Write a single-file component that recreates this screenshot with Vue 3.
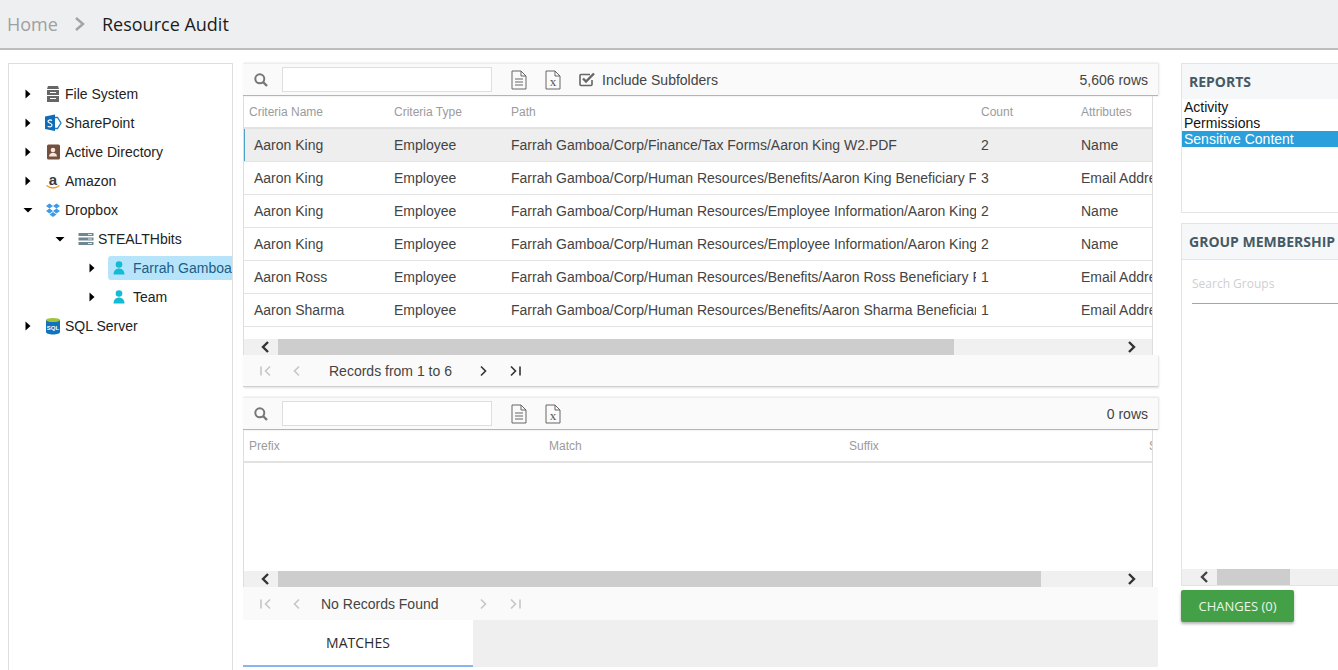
<script setup>
const rows = [
  ['Aaron King', 'Employee', 'Farrah Gamboa/Corp/Finance/Tax Forms/Aaron King W2.PDF', '2', 'Name'],
  ['Aaron King', 'Employee', 'Farrah Gamboa/Corp/Human Resources/Benefits/Aaron King Beneficiary Form.pdf', '3', 'Email Address'],
  ['Aaron King', 'Employee', 'Farrah Gamboa/Corp/Human Resources/Employee Information/Aaron King Information', '2', 'Name'],
  ['Aaron King', 'Employee', 'Farrah Gamboa/Corp/Human Resources/Employee Information/Aaron King Information', '2', 'Name'],
  ['Aaron Ross', 'Employee', 'Farrah Gamboa/Corp/Human Resources/Benefits/Aaron Ross Beneficiary Form.pdf', '1', 'Email Address'],
  ['Aaron Sharma', 'Employee', 'Farrah Gamboa/Corp/Human Resources/Benefits/Aaron Sharma Beneficiary Form.pdf', '1', 'Email Address']
]
const headers = ['Criteria Name', 'Criteria Type', 'Path', 'Count', 'Attributes']
const tree = [
  { label: 'File System', icon: 'fs', depth: 0, arrow: 'right' },
  { label: 'SharePoint', icon: 'sp', depth: 0, arrow: 'right' },
  { label: 'Active Directory', icon: 'ad', depth: 0, arrow: 'right' },
  { label: 'Amazon', icon: 'amz', depth: 0, arrow: 'right' },
  { label: 'Dropbox', icon: 'dbx', depth: 0, arrow: 'down' },
  { label: 'STEALTHbits', icon: 'srv', depth: 1, arrow: 'down' },
  { label: 'Farrah Gamboa', icon: 'user', depth: 2, arrow: 'right', selected: true },
  { label: 'Team', icon: 'user', depth: 2, arrow: 'right' },
  { label: 'SQL Server', icon: 'sql', depth: 0, arrow: 'right' }
]
</script>

<template>
  <div class="page">
    <header class="top">
      <span class="home">Home</span>
      <svg class="crumb" width="12" height="16" viewBox="0 0 12 16"><path d="M2 2l7 6-7 6" fill="none" stroke="#a3a3a3" stroke-width="2.4"/></svg>
      <span class="title">Resource Audit</span>
    </header>

    <main class="main">
      <aside class="tree">
        <div v-for="n in tree" :key="n.label" class="node" :class="'depth' + n.depth">
          <svg class="arrow" width="10" height="10" viewBox="0 0 10 10">
            <path v-if="n.arrow === 'right'" d="M2.5 0.5l5 4.5-5 4.5z" fill="#000"/>
            <path v-else d="M0.5 3h9l-4.5 4.5z" fill="#000"/>
          </svg>
          <div class="node-body" :class="{ sel: n.selected }">
            <svg class="nicon" width="18" height="18" viewBox="0 0 18 18">
              <g v-if="n.icon === 'fs'" fill="#666">
                <path d="M4 1h10l1 3H3z"/>
                <path d="M3 5h12v5H3zM6 7v1h6V7z" fill-rule="evenodd"/>
                <path d="M3 11h12v6H3zM6 13v1h6v-1z" fill-rule="evenodd"/>
              </g>
              <g v-else-if="n.icon === 'sp'">
                <path d="M10 3.5h3.500l3.500 5.500-3.500 5.500H10z" fill="none" stroke="#1c7cc7" stroke-width="1.300"/>
                <path d="M1 2.500L11 0.500v16.500L1 15z" fill="#0f6cb8"/>
                <path d="M8 6.500C6 5.500 4 6 4 7.500s4 1.500 4 3.500-2.500 2.200-4.300 1.200" fill="none" stroke="#fff" stroke-width="1.200"/>
              </g>
              <g v-else-if="n.icon === 'ad'">
                <rect x="3" y="1.500" width="13" height="15" rx="1.500" fill="#74503f"/>
                <circle cx="9" cy="7" r="2.300" fill="#f3e6de"/>
                <path d="M5 13.500c0-5 8-5 8 0z" fill="#f3e6de"/>
              </g>
              <g v-else-if="n.icon === 'amz'">
                <text x="9" y="12.500" text-anchor="middle" class="amz">a</text>
                <path d="M2.500 13.500c4 3 9 3 13 0" fill="none" stroke="#f39a1d" stroke-width="1.500"/>
              </g>
              <g v-else-if="n.icon === 'dbx'" fill="#3d9ae8">
                <path d="M5.500 2.500L9 5 5.500 7.500 2 5zM12.500 2.500L16 5l-3.500 2.500L9 5zM5.500 7.500L9 10l-3.500 2.500L2 10zM12.500 7.500L16 10l-3.500 2.500L9 10z"/>
                <path d="M5.500 13.500L9 11l3.500 2.500L9 16z"/>
              </g>
              <g v-else-if="n.icon === 'srv'">
                <rect x="1.500" y="3" width="15" height="3" fill="#6f8791"/>
                <rect x="1.500" y="7.500" width="15" height="3" fill="#6f8791"/>
                <rect x="1.500" y="12" width="15" height="3" fill="#6f8791"/>
                <path d="M11 4.500h4M11 9h4M11 13.500h4" stroke="#dfe6e9" stroke-width="1"/>
              </g>
              <g v-else-if="n.icon === 'user'" fill="#12bcd4">
                <circle cx="9" cy="5.500" r="3.300"/>
                <path d="M3.500 15.500c0-8 11-8 11 0z"/>
              </g>
              <g v-else>
                <path d="M2 3h14v12c0 1.500-3 2.500-7 2.500S2 16.500 2 15z" fill="#1273bd"/>
                <ellipse cx="9" cy="3" rx="7" ry="2" fill="#9fc43a"/>
                <text x="9" y="12.500" text-anchor="middle" class="sqlt">SQL</text>
              </g>
            </svg>
            <span class="nlabel">{{ n.label }}</span>
          </div>
        </div>
      </aside>

      <section class="center">
        <div class="toolbar">
          <svg class="search" width="16" height="16" viewBox="0 0 16 16"><circle cx="6.800" cy="6.800" r="4.500" fill="none" stroke="#777" stroke-width="2"/><path d="M10 10l4 4" stroke="#777" stroke-width="2.400"/></svg>
          <div class="sbox"></div>
          <svg class="doc" width="16" height="20" viewBox="0 0 16 20"><path d="M1 1h9l5 5v13H1z M10 1v5h5" fill="none" stroke="#666" stroke-width="1"/><path d="M4 9h8M4 12h8M4 15h8" stroke="#666" stroke-width="1"/></svg>
          <svg class="xls" width="16" height="20" viewBox="0 0 16 20"><path d="M1 1h9l5 5v13H1z M10 1v5h5" fill="none" stroke="#666" stroke-width="1"/><text x="8" y="16" text-anchor="middle" class="xt">x</text></svg>
          <svg class="chk" width="17" height="15" viewBox="0 0 17 15"><path d="M13 8v4.500a1 1 0 0 1-1 1H2a1 1 0 0 1-1-1v-9a1 1 0 0 1 1-1h9" fill="none" stroke="#666" stroke-width="1.600"/><path d="M4 6.500l3 3 8-8" fill="none" stroke="#666" stroke-width="2.400"/></svg>
          <span class="inc">Include Subfolders</span>
          <span class="count">5,606 rows</span>
        </div>
        <div class="table t1">
          <div class="row head">
            <div v-for="(h, i) in headers" :key="h" class="cell" :class="'c' + i">{{ h }}</div>
          </div>
          <div v-for="(r, ri) in rows" :key="ri" class="row data" :class="{ active: ri === 0 }">
            <div v-for="(v, i) in r" :key="i" class="cell" :class="'c' + i">{{ v }}</div>
          </div>
          <div class="spacer s1"></div>
          <div class="hbar">
            <svg class="sl" width="14" height="12" viewBox="0 0 14 12"><path d="M9 1L4 6l5 5" fill="none" stroke="#333" stroke-width="2.400"/></svg>
            <div class="thumb th1"></div>
            <svg class="sr" width="14" height="12" viewBox="0 0 14 12"><path d="M5 1l5 5-5 5" fill="none" stroke="#333" stroke-width="2.400"/></svg>
          </div>
        </div>
        <div class="pager">
          <svg class="pi first" width="14" height="12" viewBox="0 0 14 12"><path d="M2 1.500v9M11 1.500L6.500 6l4.500 4.500" fill="none" stroke="#c6c6c6" stroke-width="1.600"/></svg>
          <svg class="pi prev" width="10" height="12" viewBox="0 0 10 12"><path d="M7 1.500L2.500 6 7 10.500" fill="none" stroke="#c6c6c6" stroke-width="1.600"/></svg>
          <span class="ptext p1">Records from 1 to 6</span>
          <svg class="pi next" width="10" height="12" viewBox="0 0 10 12"><path d="M3 1.500L7.500 6 3 10.500" fill="none" stroke="#333" stroke-width="1.600"/></svg>
          <svg class="pi last" width="14" height="12" viewBox="0 0 14 12"><path d="M12 1.500v9M3 1.500L7.500 6 3 10.500" fill="none" stroke="#333" stroke-width="1.600"/></svg>
        </div>

        <div class="toolbar second">
          <svg class="search" width="16" height="16" viewBox="0 0 16 16"><circle cx="6.800" cy="6.800" r="4.500" fill="none" stroke="#777" stroke-width="2"/><path d="M10 10l4 4" stroke="#777" stroke-width="2.400"/></svg>
          <div class="sbox"></div>
          <svg class="doc" width="16" height="20" viewBox="0 0 16 20"><path d="M1 1h9l5 5v13H1z M10 1v5h5" fill="none" stroke="#666" stroke-width="1"/><path d="M4 9h8M4 12h8M4 15h8" stroke="#666" stroke-width="1"/></svg>
          <svg class="xls" width="16" height="20" viewBox="0 0 16 20"><path d="M1 1h9l5 5v13H1z M10 1v5h5" fill="none" stroke="#666" stroke-width="1"/><text x="8" y="16" text-anchor="middle" class="xt">x</text></svg>
          <span class="count">0 rows</span>
        </div>
        <div class="table t2">
          <div class="row head">
            <div class="cell w300">Prefix</div>
            <div class="cell w300">Match</div>
            <div class="cell w300">Suffix</div>
            <div class="cell">S</div>
          </div>
          <div class="spacer s2"></div>
          <div class="hbar">
            <svg class="sl" width="14" height="12" viewBox="0 0 14 12"><path d="M9 1L4 6l5 5" fill="none" stroke="#333" stroke-width="2.400"/></svg>
            <div class="thumb th2"></div>
            <svg class="sr" width="14" height="12" viewBox="0 0 14 12"><path d="M5 1l5 5-5 5" fill="none" stroke="#333" stroke-width="2.400"/></svg>
          </div>
        </div>
        <div class="pager flat">
          <svg class="pi first" width="14" height="12" viewBox="0 0 14 12"><path d="M2 1.500v9M11 1.500L6.500 6l4.500 4.500" fill="none" stroke="#c6c6c6" stroke-width="1.600"/></svg>
          <svg class="pi prev" width="10" height="12" viewBox="0 0 10 12"><path d="M7 1.500L2.500 6 7 10.500" fill="none" stroke="#c6c6c6" stroke-width="1.600"/></svg>
          <span class="ptext p2">No Records Found</span>
          <svg class="pi next2" width="10" height="12" viewBox="0 0 10 12"><path d="M3 1.500L7.500 6 3 10.500" fill="none" stroke="#c6c6c6" stroke-width="1.600"/></svg>
          <svg class="pi last" width="14" height="12" viewBox="0 0 14 12"><path d="M12 1.500v9M3 1.500L7.500 6 3 10.500" fill="none" stroke="#c6c6c6" stroke-width="1.600"/></svg>
        </div>
        <div class="tabs">
          <div class="tab">MATCHES</div>
        </div>
      </section>

      <aside class="right">
        <div class="panel reports">
          <div class="phead">REPORTS</div>
          <div class="opt">Activity</div>
          <div class="opt">Permissions</div>
          <div class="opt on">Sensitive Content</div>
        </div>
        <div class="panel groups">
          <div class="phead ph2">GROUP MEMBERSHIP</div>
          <div class="gsearch">Search Groups</div>
          <div class="gfill"></div>
          <div class="hbar rbar">
            <svg class="sl2" width="14" height="12" viewBox="0 0 14 12"><path d="M9 1L4 6l5 5" fill="none" stroke="#444" stroke-width="2.400"/></svg>
            <div class="thumb th3"></div>
          </div>
        </div>
        <button class="changes">CHANGES (0)</button>
      </aside>
    </main>
  </div>
</template>

<style scoped>
.page {
  width: 1338px;
  height: 670px;
  overflow: hidden;
  background: #fff;
  font-family: "Liberation Sans", Arial, sans-serif;
  display: flex;
  flex-direction: column;
}
.top {
  height: 48px;
  flex: none;
  background: #eeeff1;
  border-bottom: 2px solid #bdbdbd;
  display: flex;
  align-items: center;
  padding-left: 7px;
  font-family: "Open Sans", sans-serif;
  font-size: 18px;
}
.home { color: #a0a0a0; width: 67px; }
.crumb { flex: none; }
.title { color: #1c1c1c; margin-left: 16px; }
.main {
  flex: 1;
  min-height: 0;
  display: flex;
  padding: 13px 0 0 8px;
}
.tree {
  width: 225px;
  flex: none;
  box-sizing: border-box;
  height: 620px;
  border: 1px solid #dedede;
  padding-top: 15px;
  overflow: hidden;
}
.node {
  height: 29px;
  display: flex;
  align-items: center;
  font-size: 14px;
  color: #222;
}
.depth0 { padding-left: 14px; }
.depth1 { padding-left: 46px; }
.depth2 { padding-left: 78px; }
.arrow { flex: none; }
.node-body {
  flex: 1;
  min-width: 0;
  height: 24px;
  display: flex;
  align-items: center;
  margin-left: 11px;
  padding-left: 0;
  white-space: nowrap;
}
.depth0 .nlabel { margin-left: 3px; }
.depth1 .nlabel { margin-left: 3px; }
.depth1 .node-body { margin-left: 12px; }
.depth2 .node-body { margin-left: 11px; padding-left: 2px; border-radius: 3px 0 0 3px; }
.depth2 .nlabel { margin-left: 5px; }
.nicon { flex: none; }
.sel { background: #b6e5fb; }
.sel .nlabel { color: #1b5e86; }
.amz { font: bold 15px "Liberation Sans", sans-serif; fill: #3a3a3a; }
.sqlt { font: bold 6px "Liberation Sans", sans-serif; fill: #fff; }
.center {
  width: 915px;
  flex: none;
  margin-left: 10px;
  display: flex;
  flex-direction: column;
}
.toolbar {
  height: 33px;
  flex: none;
  box-sizing: border-box;
  display: flex;
  align-items: center;
  background: #fafafa;
  border-top: 1px solid #ececec;
  border-bottom: 1px solid #b5b5b5;
  box-shadow: 1px 0 2px #e0e0e0;
  font-size: 14px;
  color: #444;
  padding-left: 10px;
}
.second { margin-top: 10px; }
.sbox {
  width: 208px;
  height: 23px;
  margin-left: 13px;
  background: #fff;
  border: 1px solid #dedede;
  flex: none;
}
.doc { margin-left: 19px; flex: none; }
.xls { margin-left: 18px; flex: none; }
.chk { margin-left: 18px; flex: none; }
.inc { margin-left: 6px; }
.count { margin-left: auto; padding-right: 10px; }
.table {
  width: 910px;
  flex: none;
  box-sizing: border-box;
  border-left: 1px solid #dedede;
  border-right: 1px solid #dedede;
  overflow: hidden;
  display: flex;
  flex-direction: column;
}
.t1 { height: 259px; }
.t2 { height: 157px; }
.row {
  height: 33px;
  flex: none;
  box-sizing: border-box;
  display: flex;
  align-items: center;
  border-bottom: 1px solid #e4e4e4;
}
.head {
  border-bottom: 2px solid #e2e2e2;
  font-size: 12px;
  color: #9b9b9b;
}
.data { font-size: 14px; color: #444; }
.active { background: #eeeeee; box-shadow: inset 1px 0 0 #4c9fc9; }
.cell {
  box-sizing: border-box;
  white-space: nowrap;
  overflow: hidden;
  flex: none;
  padding-left: 5px;
}
.c0 { width: 145px; }
.data .c0 { padding-left: 10px; }
.c1 { width: 117px; padding-left: 5px; }
.c2 { width: 470px; padding-right: 5px; padding-left: 5px; }
.c3 { width: 100px; }
.c4 { width: 78px; padding-right: 0; }
.w300 { width: 300px; }
.spacer { flex: none; }
.s1 { height: 12px; }
.s2 { height: 108px; }
.hbar {
  height: 16px;
  flex: none;
  background: #f0f0f0;
  position: relative;
  display: flex;
  align-items: center;
}
.sl { margin-left: 15px; flex: none; }
.sr { margin-left: auto; margin-right: 14px; flex: none; }
.thumb { height: 16px; background: #cdcdcd; flex: none; }
.th1 { width: 676px; margin-left: 5px; }
.th2 { width: 763px; margin-left: 5px; }
.pager {
  height: 32px;
  flex: none;
  box-sizing: border-box;
  display: flex;
  align-items: center;
  background: #fafafa;
  border-bottom: 1px solid #cfcfcf;
  box-shadow: 1px 1px 2px #e0e0e0;
  font-size: 14px;
  color: #444;
  padding-left: 16px;
}
.flat { border-bottom: 0; box-shadow: none; height: 33px; }
.pi { flex: none; }
.prev { margin-left: 19px; }
.p1 { margin-left: 27px; }
.p2 { margin-left: 19px; }
.next { margin-left: 26px; }
.next2 { margin-left: 39px; }
.last { margin-left: 20px; }
.tabs {
  height: 47px;
  flex: none;
  background: #efefef;
  display: flex;
}
.tab {
  width: 230px;
  box-sizing: border-box;
  background: #fff;
  border-bottom: 2px solid #8ab4ef;
  margin-left: 0;
  height: 47px;
  display: flex;
  align-items: center;
  justify-content: center;
  font-family: "Open Sans", sans-serif;
  font-size: 14px;
  color: #2b2b2b;
}
.right {
  flex: 1;
  min-width: 0;
  margin-left: 23px;
  display: flex;
  flex-direction: column;
}
.panel {
  box-sizing: border-box;
  border-left: 1px solid #e4e4e4;
  border-top: 1px solid #e4e4e4;
  border-bottom: 1px solid #e4e4e4;
}
.reports { height: 150px; font-size: 14px; color: #111; line-height: 16px; }
.phead {
  height: 35px;
  background: #f6f7f8;
  display: flex;
  align-items: center;
  padding-left: 7px;
  font-family: "Open Sans", sans-serif;
  font-weight: 700;
  font-size: 14px;
  color: #455a64;
}
.opt { padding-left: 2px; }
.on { background: #2a9fdb; color: #fff; }
.groups {
  margin-top: 10px;
  height: 363px;
  display: flex;
  flex-direction: column;
}
.ph2 { border-bottom: 1px solid #e4e4e4; }
.gsearch {
  margin: 0 0 0 10px;
  height: 44px;
  box-sizing: border-box;
  padding-top: 15px;
  border-bottom: 1px solid #a5a5a5;
  font-family: "Open Sans", sans-serif;
  font-size: 12px;
  color: #cfcfcf;
}
.gfill { flex: 1; }
.rbar { height: 16px; margin-bottom: 0; }
.sl2 { margin-left: 16px; flex: none; }
.th3 { width: 73px; margin-left: 5px; }
.changes {
  width: 113px;
  height: 32px;
  margin-top: 4px;
  flex: none;
  border: 0;
  border-radius: 2px;
  background: #43a047;
  color: #e9f5ea;
  font-family: "Open Sans", sans-serif;
  font-size: 13px;
  box-shadow: 0 2px 3px rgba(0,0,0,.3);
  padding: 0;
}
.xt { font: 13px "Liberation Serif", serif; fill: #555; }
</style>
